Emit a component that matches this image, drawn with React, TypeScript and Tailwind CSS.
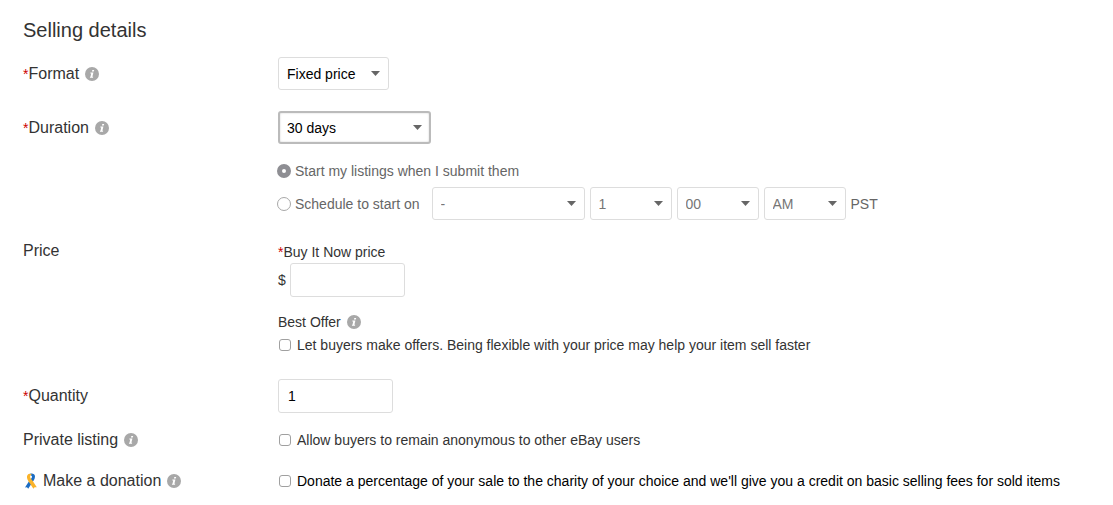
import { useState } from "react";
import type { ReactNode } from "react";
import clsx from "clsx";

type SelectBoxType = {
  label: string;
  options: string[];
  className?: string;
  muted?: boolean;
  highlighted?: boolean;
};

function SelectBox({ label, options, className, muted = false, highlighted = false }: SelectBoxType) {
  return (
    <div className={clsx("relative h-[33px]", className)}>
      <select
        aria-label={label}
        className={clsx(
          "h-full w-full appearance-none bg-white outline-none",
          muted ? "text-[#767676]" : "text-black",
          highlighted
            ? "rounded-[3px] border-2 border-[#bbbbbb] pl-[7px] shadow-[inset_0_0_2px_#cccccc]"
            : "rounded-[3px] border border-[#dddddd] pl-2"
        )}
      >
        {options.map((option) => (
          <option key={option}>{option}</option>
        ))}
      </select>
      <svg
        viewBox="0 0 9 5"
        className="pointer-events-none absolute top-3.5 right-[9px] h-[5px] w-[9px]"
        fill="#666666"
      >
        <path d="M0 0h9L4.5 5z" />
      </svg>
    </div>
  );
}

function InfoButton({ topic }: { topic: string }) {
  return (
    <button type="button" aria-label={`About ${topic}`} className="size-3.5 shrink-0">
      <svg viewBox="0 0 14 14" className="size-3.5">
        <circle cx="7" cy="7" r="7" fill="#a8a8a8" />
        <path
          d="M7.3 2.9h1.9l-.4 1.7H6.9zM5.4 5.6h3l-1 4.1h.8l-.2 1H4.9l.2-1h.4l.7-3.1h-.9z"
          fill="#ffffff"
        />
      </svg>
    </button>
  );
}

function Ribbon() {
  return (
    <svg viewBox="0 0 12 16" className="mx-0.5 h-4 w-3 shrink-0">
      <path
        d="M4 1.400C5.500.200 9.900-.200 10 3.600c0 2.500-1.600 4.500-3.200 6.600l-3.600 5.600-1.200-1.500-2 .2 4.300-6.700C6.200 5.800 7.300 4.600 6.900 3.200 6.500 2.100 5.200 1.900 4 1.400z"
        fill="#1c6dc4"
      />
      <path
        d="M5 .7C2.700.7 1.700 2.700 2 4.700c.3 2 1.600 3.800 2.800 5.500l3.600 5.600 1.200-1.600 2.200.1-4.400-6.900C6.200 5.800 5 4.700 5.100 3.400c.1-1 .9-1.500 1.800-1.900C6.400 1 5.800.7 5 .7z"
        fill="#fab32a"
      />
    </svg>
  );
}

function Required() {
  return <span className="text-sm leading-none text-[#cc0000]">*</span>;
}

type RowType = {
  label: ReactNode;
  children: ReactNode;
  className?: string;
};

function Row({ label, children, className }: RowType) {
  return (
    <div className={clsx("grid grid-cols-[255px_1fr]", className)}>
      <div className="flex items-center gap-1.5 text-base leading-5">{label}</div>
      <div>{children}</div>
    </div>
  );
}

const checkboxClass =
  "size-3 shrink-0 appearance-none rounded-[3px] border border-[#a0a0a0] bg-white checked:bg-[#8e8e93]";

const radioClass =
  "size-3.5 shrink-0 appearance-none rounded-full border border-[#a8a8a8] bg-white checked:border-[5px] checked:border-[#8e8e93]";

const inputClass =
  "h-[34px] w-[115px] rounded-[3px] border border-[#dddddd] bg-white px-[9px] text-black outline-none";

export default function App() {
  const [start, setStart] = useState("now");

  return (
    <form className="min-h-screen bg-white px-[23px] pt-4 pb-3.5 font-['Liberation_Sans',Arial,sans-serif] text-sm text-[#333333]">
      <h2 className="mb-[13px] text-xl leading-7">Selling details</h2>

      <Row
        className="mb-[21px]"
        label={
          <>
            <span><Required />Format</span>
            <InfoButton topic="format" />
          </>
        }
      >
        <SelectBox label="Format" className="w-[111px]" options={["Fixed price", "Auction"]} />
      </Row>

      <Row
        label={
          <>
            <span><Required />Duration</span>
            <InfoButton topic="duration" />
          </>
        }
      >
        <SelectBox
          label="Duration"
          className="w-[153px]"
          highlighted
          options={["30 days", "10 days", "7 days"]}
        />
      </Row>

      <div className="mt-[17px] mb-[21px] pl-[254px] text-[#666666]">
        <label className="flex items-center gap-1 leading-5">
          <input
            type="radio"
            name="start"
            className={radioClass}
            checked={start === "now"}
            onChange={() => setStart("now")}
          />
          Start my listings when I submit them
        </label>
        <div className="mt-1.5 flex items-center gap-[5px]">
          <label className="mr-[7px] flex items-center gap-1 leading-5">
            <input
              type="radio"
              name="start"
              className={radioClass}
              checked={start === "later"}
              onChange={() => setStart("later")}
            />
            Schedule to start on
          </label>
          <SelectBox label="Start date" className="w-[153px]" muted options={["-"]} />
          <SelectBox label="Hour" className="w-[82px]" muted options={["1", "2", "3"]} />
          <SelectBox label="Minute" className="w-[82px]" muted options={["00", "15", "30", "45"]} />
          <SelectBox label="AM or PM" className="w-[82px]" muted options={["AM", "PM"]} />
          <span>PST</span>
        </div>
      </div>

      <Row className="mb-[22px] items-start" label="Price">
        <label htmlFor="price" className="block leading-[22px]">
          <Required />Buy It Now price
        </label>
        <div className="flex items-center gap-1">
          <span>$</span>
          <input id="price" type="text" className={inputClass} />
        </div>
        <div className="mt-3.5 flex items-center gap-1.5 leading-[22px]">
          Best Offer
          <InfoButton topic="Best Offer" />
        </div>
        <label className="flex items-center gap-1.5 pl-px leading-6">
          <input type="checkbox" className={checkboxClass} />
          Let buyers make offers. Being flexible with your price may help your item sell faster
        </label>
      </Row>

      <Row
        className="mb-[17px]"
        label={<label htmlFor="quantity"><Required />Quantity</label>}
      >
        <input id="quantity" type="text" defaultValue="1" className={clsx(inputClass, "block")} />
      </Row>

      <Row
        className="mb-[21px]"
        label={
          <>
            <span>Private listing</span>
            <InfoButton topic="private listing" />
          </>
        }
      >
        <label className="flex items-center gap-1.5 pl-px leading-5">
          <input type="checkbox" className={checkboxClass} />
          Allow buyers to remain anonymous to other eBay users
        </label>
      </Row>

      <Row
        label={
          <>
            <span className="flex items-center gap-1">
              <Ribbon />
              Make a donation
            </span>
            <InfoButton topic="donations" />
          </>
        }
      >
        <label className="flex items-center gap-1.5 pl-px leading-5 text-black">
          <input type="checkbox" className={checkboxClass} />
          Donate a percentage of your sale to the charity of your choice and we'll give you a credit on basic selling
          fees for sold items
        </label>
      </Row>
    </form>
  );
}
